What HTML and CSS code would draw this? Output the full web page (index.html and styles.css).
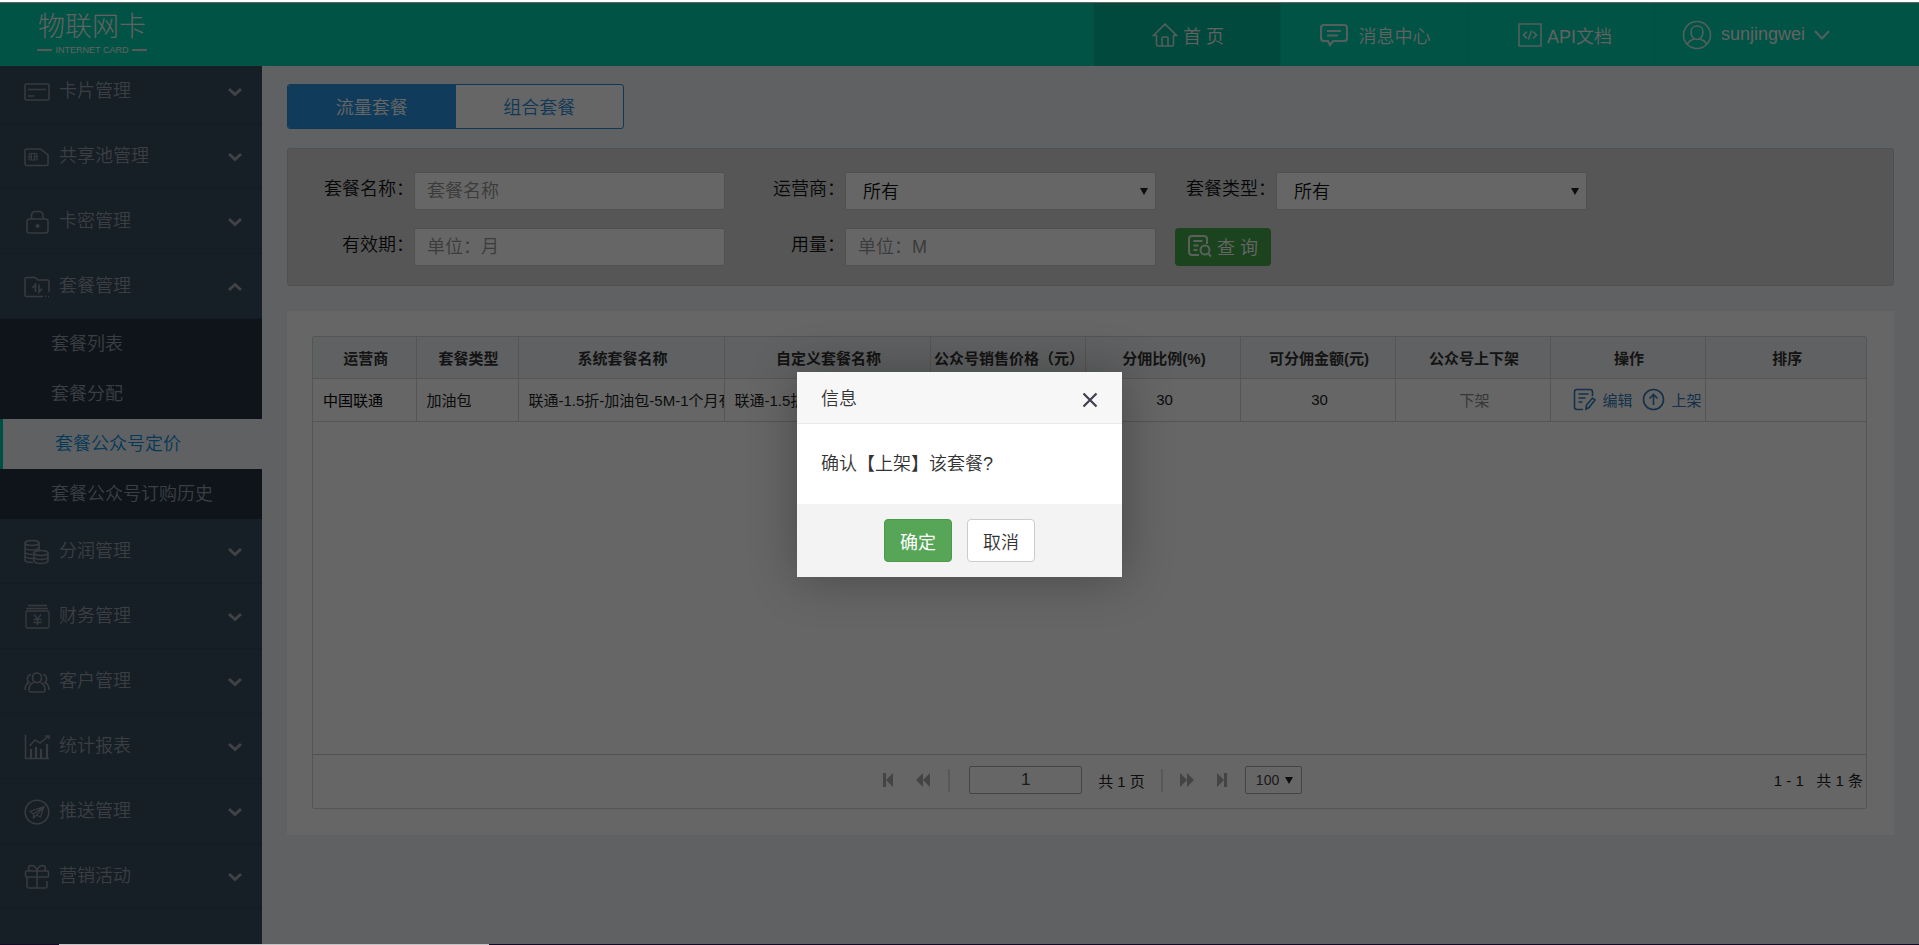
FILE: index.html
```html
<!DOCTYPE html>
<html lang="zh-CN">
<head>
<meta charset="utf-8">
<title>物联网卡</title>
<link rel="stylesheet" href="styles.css">
</head>
<body>
<svg class="defs" width="0" height="0" aria-hidden="true">
  <symbol id="chev" viewBox="0 0 16 10"><path d="M2 2l6 5.500l6-5.500" fill="none" stroke="currentColor" stroke-width="3"/></symbol>
</svg>
<div class="page">
  <header class="topbar">
    <a class="logo" href="#">
      <span class="logo-name">物联网卡</span>
      <span class="logo-sub">INTERNET CARD</span>
    </a>
    <nav class="topnav">
      <a class="topnav-item active" href="#">
        <svg width="26" height="24" viewBox="0 0 26 24"><path d="M1.500 12.500L13 1l11.500 11.500H21.500V21.500q0 1.500-1.500 1.500H6q-1.500 0-1.500-1.500V12.500zM10 23v-8q0-1 1-1h4q1 0 1 1v8"/></svg>首 页</a>
      <a class="topnav-item message" href="#">
        <svg width="28" height="24" viewBox="0 0 28 24"><path stroke-width="2.200" d="M4 2H24q3 0 3 3v10q0 3-3 3H13l-3 4-2-4H4q-3 0-3-3V5q0-3 3-3zM7 8h14M7 12.500h11"/></svg>消息中心</a>
      <a class="topnav-item api" href="#">
        <svg width="24" height="24" viewBox="0 0 24 24"><path d="M1 1h22v22H1zM9 8.500L5.500 12 9 15.500M15 8.500l3.500 3.500L15 15.500M13.500 7.500l-3 9"/></svg>API文档</a>
      <a class="topnav-item user" href="#">
        <svg width="30" height="30" viewBox="0 0 30 30"><circle cx="15" cy="15" r="13.500"/><path d="M15 6c-4 0-6 3-6 6 0 4 2.500 7.500 6 7.500s6-3.500 6-7.500c0-3-2-6-6-6zM5 24q3-4 7-5M25 24q-3-4-7-5"/></svg><span>sunjingwei</span>
        <svg width="16" height="10" viewBox="0 0 16 10"><path stroke-width="2" d="M1 1l7 7.500L15 1"/></svg></a>
    </nav>
  </header>

  <div class="columns">
    <nav class="sidebar">
      <a class="menu first" href="#"><svg class="mi" viewBox="0 0 26 26"><path d="M2.500 5h21q1.500 0 1.500 1.500v13q0 1.500-1.500 1.500h-21Q1 21 1 19.500v-13Q1 5 2.500 5zM4 10.500h18M4 17h6"/></svg><span>卡片管理</span><svg class="chev"><use href="#chev"/></svg></a>
      <a class="menu" href="#"><svg class="mi" viewBox="0 0 26 26"><path d="M2.500 5h14L24 11v9q0 1.500-1.500 1.500h-20Q1 21.500 1 20V6.500Q1 5 2.500 5z"/><path stroke-width="1.200" d="M6 9.500h6q1 0 1 1v4.500q0 1-1 1H6q-1 0-1-1v-4.500q0-1 1-1zM7.500 9.500v7M10.500 9.500v7M10.500 12.700H13M5 12.700h2.500"/></svg><span>共享池管理</span><svg class="chev"><use href="#chev"/></svg></a>
      <a class="menu" href="#"><svg class="mi" viewBox="0 0 26 26"><path d="M5.500 10h16q2.500 0 2.500 2.500v9q0 2.500-2.500 2.500h-16Q3 24 3 21.500v-9Q3 10 5.500 10zM7.500 10V7q0-4.500 4-4.500h3.500q4 0 4 4.500v3"/><circle cx="13.500" cy="17" r="1.200" fill="currentColor"/></svg><span>卡密管理</span><svg class="chev"><use href="#chev"/></svg></a>
      <a class="menu" href="#"><svg class="mi" viewBox="0 0 26 26"><path d="M19 22.500H2.500Q1 22.500 1 21V5q0-1.500 1.500-1.500H11L14 6h9.500Q25 6 25 7.500V18M21 22.500h1M24 22.500h1"/><path d="M8.500 14l3-3.500V18M15 10.500V18l3-3.500"/></svg><span>套餐管理</span><svg class="chev up"><use href="#chev"/></svg></a>
      <div class="submenu">
        <a href="#">套餐列表</a>
        <a href="#">套餐分配</a>
        <a class="current" href="#">套餐公众号定价</a>
        <a href="#">套餐公众号订购历史</a>
      </div>
      <a class="menu" href="#"><svg class="mi" viewBox="0 0 26 26"><ellipse cx="8" cy="4" rx="7" ry="2.500"/><path d="M1 4v17q0 2.500 8 2.500M15 4v7M1 8.500q1 2.500 7 2.500t7-2.500M1 13q1 2.500 8 2.500M1 17q1 2.500 8 2.500"/><ellipse cx="17" cy="14" rx="7" ry="2.500"/><path d="M10 14v8q1 2.500 7 2.500t7-2.500v-8M10 18q1 2.500 7 2.500t7-2.500"/></svg><span>分润管理</span><svg class="chev"><use href="#chev"/></svg></a>
      <a class="menu" href="#"><svg class="mi" viewBox="0 0 26 26"><path d="M4 1.500h19M2 4.500h22"/><path d="M3.500 7h20q1.500 0 1.500 1.500v14q0 1.500-1.500 1.500h-20Q2 24 2 22.500v-14Q2 7 3.500 7zM10 10.500l3.500 4.500 3.500-4.500M13.500 15v6M9.500 15.500h8M9.500 18.500h8" stroke-width="1.300"/></svg><span>财务管理</span><svg class="chev"><use href="#chev"/></svg></a>
      <a class="menu" href="#"><svg class="mi" viewBox="0 0 26 26"><path d="M13 4c-3 0-4.500 2-4.500 4.500S10 13.500 13 13.500s4.500-2.500 4.500-5S16 4 13 4zM9.500 13.500Q5 15 5 21q0 2 2 2h12q2 0 2-2 0-6-4.500-7.500M7 5.500Q3 6 3.500 11q.5 2 1.500 2.500Q1 15.500 1 21M19 5.500q4 .5 3.500 5.500-.5 2-1.500 2.500 4 2 4 7.500"/></svg><span>客户管理</span><svg class="chev"><use href="#chev"/></svg></a>
      <a class="menu" href="#"><svg class="mi" viewBox="0 0 26 26"><path d="M1.500 1v23.500H25M5.500 12l5.500-6 5 3 8-6.500M21 2h4v3"/><path stroke-width="2.200" d="M7 24v-9M12 24V13M17 24v-9M23 24V10"/></svg><span>统计报表</span><svg class="chev"><use href="#chev"/></svg></a>
      <a class="menu" href="#"><svg class="mi" viewBox="0 0 26 26"><circle cx="13" cy="13" r="11.800"/><path stroke-width="1.200" d="M20 7.500L6 12.500l3.500 2.500L20 7.500l-3.500 10.500-4-2L20 7.500M9.500 15v4l3-3"/></svg><span>推送管理</span><svg class="chev"><use href="#chev"/></svg></a>
      <a class="menu" href="#"><svg class="mi" viewBox="0 0 26 26"><path d="M2.500 7h21q1 0 1 1v4q0 1-1 1h-21q-1 0-1-1V8q0-1 1-1zM3 13v9q0 2 2 2h16q2 0 2-2v-5M13 7v17M13 7Q12 2 8 1.500 4 1.500 4.500 5L6 7M13 7q1-5 5-5.500 4 0 3.500 3.500L20 7"/></svg><span>营销活动</span><svg class="chev"><use href="#chev"/></svg></a>
    </nav>

    <main class="content">
      <div class="tabs">
        <button type="button" class="tab selected">流量套餐</button>
        <button type="button" class="tab">组合套餐</button>
      </div>

      <form class="filters">
        <div class="field"><label for="f-name">套餐名称：</label><input id="f-name" type="text" placeholder="套餐名称"></div>
        <div class="field"><label for="f-op">运营商：</label><select id="f-op"><option>所有</option></select></div>
        <div class="field"><label for="f-type">套餐类型：</label><select id="f-type"><option>所有</option></select></div>
        <div class="field first-col"><label for="f-term">有效期：</label><input id="f-term" type="text" placeholder="单位：月"></div>
        <div class="field"><label for="f-use">用量：</label><input id="f-use" type="text" placeholder="单位：M"></div>
        <div class="field"><button type="button" class="search"><svg width="24" height="24" viewBox="0 0 24 24"><path d="M11 21H4q-3 0-3-3V5q0-3 3-3h12q3 0 3 3v5M5.500 7h9M5.500 11.500h5M5.500 16h4"/><circle cx="17" cy="16" r="4.500"/><path d="M20 19.500l3 3"/></svg>查 询</button></div>
      </form>

      <section class="card">
        <div class="grid">
          <table>
            <colgroup><col class="c1"><col class="c2"><col class="c3"><col class="c3"><col class="c5"><col class="c5"><col class="c5"><col class="c5"><col class="c5"><col></colgroup>
            <thead><tr><th>运营商</th><th>套餐类型</th><th>系统套餐名称</th><th>自定义套餐名称</th><th>公众号销售价格（元）</th><th>分佣比例(%)</th><th>可分佣金额(元)</th><th>公众号上下架</th><th>操作</th><th>排序</th></tr></thead>
            <tbody><tr><td class="strong">中国联通</td><td>加油包</td><td>联通-1.5折-加油包-5M-1个月有效</td><td>联通-1.5折</td><td class="mid"></td><td class="mid">30</td><td class="mid">30</td><td class="mid off">下架</td>
              <td class="ops"><div class="ops-row"><a href="#"><svg width="23" height="23" viewBox="0 0 23 23"><path d="M10 21.500H4q-2.500 0-2.500-2.500V4Q1.500 1.500 4 1.500h13q2.500 0 2.500 2.500v4M5.500 6h10M5.500 10h7M5.500 14h4M13 21l.5-4 6-7 2.500 2-6 7.500z"/></svg>编辑</a><a href="#"><svg width="23" height="23" viewBox="0 0 23 23"><circle cx="11.500" cy="11.500" r="10"/><path d="M11.500 17V7M7.500 10.500l4-4 4 4"/></svg>上架</a></div></td><td></td></tr></tbody>
          </table>
          <div class="pager">
            <div class="pager-center">
              <button type="button" aria-label="第一页"><svg width="10" height="14" viewBox="0 0 10 14"><path d="M0 0h3v14H0zM10 0v14L3 7z"/></svg></button>
              <button type="button" class="rev" aria-label="上一页"><svg width="14" height="14" viewBox="0 0 14 14"><path d="M7 0v14L0 7zM14 0v14L7 7z"/></svg></button>
              <i class="sep"></i>
              <input type="text" value="1" aria-label="页码">
              <span class="total">共 1 页</span>
              <i class="sep"></i>
              <button type="button" class="fwd" aria-label="下一页"><svg width="14" height="14" viewBox="0 0 14 14"><path d="M7 0v14l7-7zM0 0v14l7-7z"/></svg></button>
              <button type="button" class="last" aria-label="最后一页"><svg width="10" height="14" viewBox="0 0 10 14"><path d="M7 0h3v14H7zM0 0v14l7-7z"/></svg></button>
              <select aria-label="每页条数"><option>100</option></select>
            </div>
            <span class="range">1 - 1&nbsp;&nbsp; 共 1 条</span>
          </div>
        </div>
      </section>
    </main>
  </div>

  <div class="shade">
    <div class="dialog" role="dialog" aria-labelledby="dlg-title">
      <div class="dialog-head"><span id="dlg-title">信息</span>
        <button type="button" class="close" aria-label="关闭"><svg width="16" height="16" viewBox="0 0 16 16"><path d="M1.500 1.500l13 13M14.500 1.500l-13 13"/></svg></button></div>
      <p class="dialog-body">确认【上架】该套餐?</p>
      <div class="dialog-foot"><button type="button" class="ok">确定</button><button type="button" class="cancel">取消</button></div>
    </div>
  </div>
  <div class="edge"></div>
</div>
</body>
</html>
```
FILE: styles.css
```css
* { box-sizing: border-box; }
body {
  margin: 0;
  font-family: "Liberation Sans", "Noto Sans CJK SC", sans-serif;
  font-size: 18px;
  color: #333;
}
a { color: inherit; text-decoration: none; }
button, input, select { font: inherit; margin: 0; }
svg { fill: none; stroke: currentColor; stroke-width: 1.6; flex: none; }
.defs { position: absolute; }

.page {
  position: relative;
  min-height: 100vh;
  display: flex;
  flex-direction: column;
  border-top: 2px solid #fff;
  background: #f0f2f5;
  overflow: hidden;
}

/* Top bar */
.topbar {
  display: flex;
  justify-content: space-between;
  height: 64px;
  border-top: 1px solid #fff;
  background: #00cfac;
  color: #f4f4f4;
}
.topbar svg { opacity: .85; }
.logo {
  display: flex;
  flex-direction: column;
  width: 110px;
  margin-left: 37px;
  padding-top: 9px;
}
.logo-name { font-size: 27px; line-height: 30px; font-weight: 300; text-align: center; white-space: nowrap; }
.logo-sub {
  display: flex;
  align-items: center;
  justify-content: space-between;
  font-size: 9px;
  line-height: 16px;
  white-space: nowrap;
}
.logo-sub::before, .logo-sub::after { content: ""; width: 15px; height: 2px; background: #ddd; }
.topnav { display: flex; width: 825px; font-weight: 350; }
.topnav-item {
  display: flex;
  flex: 0 0 187px;
  align-items: center;
  justify-content: center;
  gap: 5px;
  padding-left: 2px;
  border-right: 1px solid #00c7a5;
  white-space: nowrap;
}
.topnav-item.active { background: #00b796; }
.topnav-item.message { gap: 11px; }
.topnav-item.api { padding-left: 8px; }
.topnav-item.user { flex: 1; justify-content: flex-start; gap: 9px; padding-left: 27px; border: 0; }

/* Side menu */
.columns { display: flex; flex: 1; }
.sidebar { flex: 0 0 262px; background: #374b5f; color: #949ca8; font-weight: 350; }
.menu {
  display: flex;
  align-items: center;
  height: 65px;
  padding: 2px 19px 0 24px;
  border-bottom: 1px solid #324457;
}
.menu.first { height: 58px; padding-top: 0; padding-bottom: 5px; }
.menu span { flex: 1; padding: 0 0 3px 9px; line-height: 26px; }
.mi { width: 26px; height: 26px; color: #89919c; }
.chev { width: 16px; height: 10px; color: #a0a5ad; }
.chev.up { transform: rotate(180deg); }
.submenu { background: #263241; }
.submenu a { display: block; height: 50px; padding-left: 51px; line-height: 50px; }
.submenu .current { padding-left: 52px; border-left: 3px solid #00c8a5; background: #f0f2f5; color: #0b8fe0; }

/* Content */
.content { flex: 1; min-width: 0; padding: 18px 25px 0; }
.tabs { display: flex; width: 337px; border: 1px solid #2b8cd8; border-radius: 3px; background: #fff; overflow: hidden; }
.tab { flex: 1; height: 43px; padding: 0 0 2px; border: 0; background: none; color: #2b8cd8; font-weight: 350; }
.tab.selected { background: #2b94e0; color: #fff; }

.filters {
  display: grid;
  grid-template-columns: 437fr 431fr 431fr 306fr;
  row-gap: 18px;
  margin-top: 19px;
  padding: 23px 0 19px;
  border: 1px solid #c8c8cb;
  border-radius: 3px;
  background: #d7d7da;
  font-weight: 350;
}
.field { position: relative; display: flex; align-items: flex-start; }
.field:nth-child(4) { grid-column: 1; }
.field label { flex: 1; line-height: 34px; text-align: right; white-space: nowrap; color: #111; }
.field input, .field select {
  flex: 0 0 311px;
  width: 311px;
  height: 38px;
  padding: 0 12px;
  border: 1px solid #c8c8c8;
  border-radius: 2px;
  background: #fff;
  color: #111;
}
.field input::placeholder { color: #949494; opacity: 1; }
select { appearance: none; background: #fff; }
.field select { padding: 2px 17px 0; }
.field:has(select)::after {
  content: "";
  position: absolute;
  right: 8px;
  top: 16px;
  border: 4px solid transparent;
  border-top: 7px solid #222;
  border-bottom: 0;
}
.search {
  display: flex;
  align-items: center;
  justify-content: center;
  gap: 5px;
  width: 96px;
  height: 38px;
  margin-left: 19px;
  padding: 0 0 2px;
  border: 0;
  border-radius: 4px;
  background: #42a74c;
  color: #fff;
  font-weight: 350;
}
.search svg { stroke-width: 2; opacity: .85; }

.card { margin-top: 25px; padding: 25px 27px 26px 25px; background: #fff; }
.grid { border: 1px solid #d5d5d8; border-radius: 2px; }
table { width: 100%; table-layout: fixed; border-collapse: collapse; font-size: 15px; }
.c1 { width: 103px; }
.c2 { width: 102px; }
.c3 { width: 206px; }
.c5 { width: 155px; }
th { height: 41px; padding: 0 0 0 3px; background: #f0f2f5; color: #333; font-weight: 700; white-space: nowrap; }
td { height: 43px; padding: 0 0 0 10px; font-weight: 400; color: #222; overflow: hidden; white-space: nowrap; }
th, td { border-right: 1px solid #d5d5d8; border-bottom: 1px solid #d5d5d8; }
th:last-child, td:last-child { border-right: 0; }
.strong { color: #000; }
.mid { padding: 0 0 0 4px; text-align: center; }
.off { color: #8a8a8a; }
.ops { padding: 0; }
.ops-row { display: flex; justify-content: flex-end; gap: 10px; padding-right: 3px; color: #337ab7; }
.ops a { display: flex; align-items: center; gap: 6px; }

.pager {
  display: grid;
  grid-template-columns: 1fr auto 1fr;
  align-items: center;
  height: 54px;
  margin-top: 332px;
  padding: 0 0 2px 6px;
  border-top: 1px solid #c8c8cb;
  font-size: 15px;
  color: #222;
}
.pager-center { grid-column: 2; display: flex; align-items: center; position: relative; }
.pager-center button { display: flex; padding: 0; border: 0; background: none; color: #aaa; }
.pager-center button svg { fill: currentColor; stroke: none; }
.pager-center .rev { margin: 0 18px 0 23px; }
.sep { width: 2px; height: 23px; background: #ddd; }
.pager-center input { width: 113px; height: 28px; margin: 0 16px 0 19px; border: 1px solid #aaa; border-radius: 2px; background: #fff; text-align: center; font-size: 17px; color: #444; }
.total { margin-right: 16px; }
.pager-center .fwd { margin: 0 23px 0 17px; }
.pager-center .last { margin-right: 18px; }
.pager-center select { width: 57px; height: 28px; padding: 0 10px; border: 1px solid #aaa; border-radius: 2px; font-size: 14px; color: #444; }
.pager-center::after {
  content: "";
  position: absolute;
  right: 9px;
  top: 11px;
  border: 4px solid transparent;
  border-top: 7px solid #222;
  border-bottom: 0;
}
.range { justify-self: end; padding: 0 3px 2px 0; }

/* Dialog */
.shade {
  position: absolute;
  inset: 0;
  display: flex;
  align-items: center;
  justify-content: center;
  padding-top: 2px;
  background: rgba(0, 0, 0, .6);
}
.dialog { width: 325px; background: #fff; border-radius: 2px; box-shadow: 1px 1px 50px rgba(0, 0, 0, .3); font-weight: 350; }
.dialog-head {
  display: flex;
  align-items: center;
  justify-content: space-between;
  height: 52px;
  padding: 0 24px;
  border-bottom: 1px solid #eaeaea;
  background: #f7f7f7;
}
#dlg-title { padding-bottom: 2px; }
.close { display: flex; padding: 4px 0 0; border: 0; background: none; color: #3f3d50; }
.close svg { stroke-width: 2.2; }
.dialog-body { margin: 0; padding: 25px 24px; line-height: 30px; }
.dialog-foot { display: flex; justify-content: center; gap: 15px; padding: 15px 0; background: #f3f3f3; }
.dialog-foot button { width: 68px; height: 43px; padding: 0; border: 1px solid #ccc; border-radius: 4px; background: #fff; color: #333; font-weight: 350; }
.dialog-foot .ok { border-color: #4a9a4a; background: #57a657; color: #fff; font-weight: 400; }

/* Thin strip along the bottom edge of the window */
.edge {
  position: absolute;
  inset: auto 0 0;
  height: 1px;
  background: linear-gradient(90deg, #150a26 59px, #c4c2c4 59px, #c4c2c4 489px, #150a26 489px);
}
```
